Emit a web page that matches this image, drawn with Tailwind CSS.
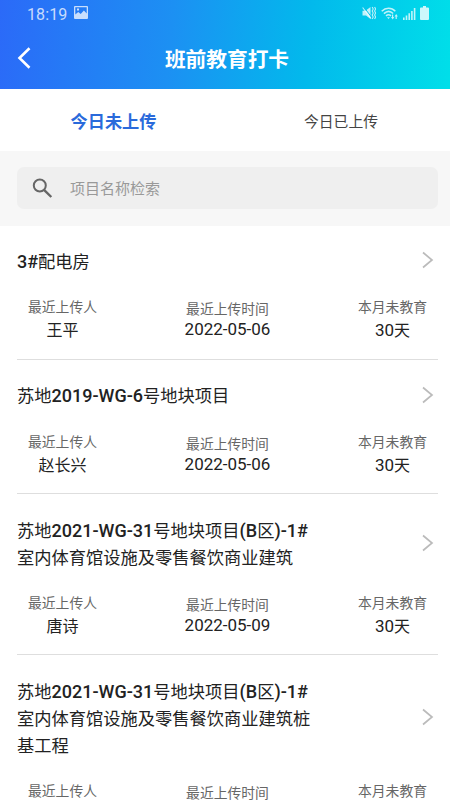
<!DOCTYPE html>
<html lang="zh-CN">
<head>
<meta charset="utf-8">
<title>班前教育打卡</title>
<script src="https://cdn.jsdelivr.net/npm/@tailwindcss/browser@4"></script>
</head>
<body class="bg-white">
<div class="w-[450px] h-[800px] overflow-hidden flex flex-col bg-white text-[#222] font-[Roboto,'Noto_Sans_CJK_SC',sans-serif]">
  <header class="h-[88.5px] shrink-0 bg-linear-[95deg,#2b6af8_0%,#1c90f3_38%,#02b9ec_68%,#00dfe9_100%] text-white">
    <div class="h-[28px] flex items-center pl-[27px] pr-[21px] text-white/75">
      <span class="text-[16px] leading-none tracking-[0.1px] pt-px">18:19</span>
      <svg class="ml-[7px] -mt-[3px]" width="14" height="13" viewBox="0 0 14 13"><path fill="currentColor" fill-rule="evenodd" d="M1 0h12a1 1 0 0 1 1 1v11a1 1 0 0 1-1 1H1a1 1 0 0 1-1-1V1a1 1 0 0 1 1-1zM1.300 1.300v7.200L4.200 6l2.500 2 3.200-3.600 2.800 3V1.300zM3 2.600h2v2H3z"/></svg>
      <svg class="ml-auto -mt-[2px]" width="14" height="14" viewBox="0 0 14 14" fill="none" stroke="currentColor"><path fill="currentColor" stroke="none" d="M.5 4.800h3L8.500 1v12L4 9.500H.5z"/><path stroke="#08c2ec" stroke-width="1" d="M1.800 1l8 10.500"/><path stroke-width="1.100" d="M.6 1.500l8.400 11"/><path stroke-width="1.100" d="M10.200 1l1 2-1 2 1 2-1 2 1 2-1 2M12.600 1l1 2-1 2 1 2-1 2 1 2-1 2"/></svg>
      <svg class="ml-[5px] -mt-[2px]" width="18" height="13" viewBox="0 0 18 13" fill="none" stroke="currentColor" stroke-width="1.500"><path d="M.7 4.200c4-4 9.800-4 13.600 0M2.900 6.600c3-2.800 6.500-2.800 9.200 0M5 8.900c1.600-1.500 3.400-1.500 5 0"/><path stroke="none" fill="currentColor" d="M6 10.200h3L7.500 12zM10 10h1V7.500h1.200V10h1.100l-1.600 2.500zM13.500 9.500l1.700-2.500 1.700 2.500h-1.100v2.500h-1.200V9.500z"/></svg>
      <svg class="ml-[4px]" width="13" height="12" viewBox="0 0 13 12" fill="currentColor"><path d="M0 9.500h1.600V12H0zM2.700 7.500h1.600V12H2.700zM5.400 5.300H7V12H5.400zM8.100 3h1.600v9H8.100zM10.800 0h1.600v12h-1.600z"/></svg>
      <svg class="ml-[4px] text-white/80 -mt-[2px]" width="9" height="14" viewBox="0 0 9 14" fill="currentColor"><path d="M3 0h3v1.500h2a1 1 0 0 1 1 1V13a1 1 0 0 1-1 1H1a1 1 0 0 1-1-1V2.500a1 1 0 0 1 1-1h2z"/></svg>
    </div>
    <div class="h-[60px] grid grid-cols-[60px_1fr_60px] items-center">
      <svg class="ml-[17px]" width="14" height="22" viewBox="0 0 14 22" fill="none" stroke="#fff" stroke-width="2.600"><path d="M12.500 1.200L2.500 11l10 9.800"/></svg>
      <h1 class="text-center text-[20.7px] font-bold leading-none pl-[4px] pt-[5px]">班前教育打卡</h1>
    </div>
  </header>
  <nav class="h-[62px] shrink-0 grid grid-cols-2 items-center text-center pt-[5px]">
    <div class="text-[17.2px] font-bold text-[#2a6adb] pl-[2px] pt-px">今日未上传</div>
    <div class="text-[14.8px] text-[#444] pl-[7px]">今日已上传</div>
  </nav>
  <div class="h-[75px] shrink-0 bg-[#f7f7f7] pt-[16.5px] pl-[17px] pr-[12px]">
    <div class="h-[42px] rounded-[7px] bg-[#efefef] flex items-center pl-[15px] text-[15px] text-[#999]">
      <svg width="21" height="21" viewBox="0 0 21 21" fill="none" stroke="#666" stroke-width="2"><circle cx="7.800" cy="7.500" r="6"/><path stroke-width="2.400" d="M12 11.800l7.300 7.200"/></svg>
      <span class="ml-[17px] pt-[3px]">项目名称检索</span>
    </div>
  </div>
  <main class="pl-[17px] pr-[12px]">
    <article class="h-[134.2px] border-b border-[#dedede] pt-[23.500px]">
      <div class="flex items-center justify-between"><h2 class="text-[17.25px] leading-[26.7px]"><span class="font-medium text-[18px] leading-none">3#</span>配电房</h2><svg class="mr-[4px] -mt-[4px]" width="12" height="18" viewBox="0 0 12 18" fill="none" stroke="#bbb" stroke-width="1.700"><path d="M1 1.500L10 9l-9 7.500"/></svg></div>
      <div class="mt-[20.500px] flex justify-between text-center text-[16px] leading-[24px]">
        <div class="w-[91px]"><p class="text-[13.8px] leading-[22px] text-[#666]">最近上传人</p><p class="pt-px">王平</p></div>
        <div class="w-[100px] pt-[2px]"><p class="text-[13.8px] leading-[22px] text-[#666]">最近上传时间</p><p class="-mt-[3px] text-[17px]">2022-05-06</p></div>
        <div class="w-[91px]"><p class="text-[13.8px] leading-[22px] text-[#666]">本月未教育</p><p class="pt-px"><span class="text-[17px] leading-none">30</span>天</p></div>
      </div>
    </article>
    <article class="h-[134.2px] border-b border-[#dedede] pt-[23.500px]">
      <div class="flex items-center justify-between"><h2 class="text-[17.25px] leading-[26.7px]">苏地<span class="font-medium text-[18px] leading-none">2019-WG-6</span>号地块项目</h2><svg class="mr-[4px] -mt-[4px]" width="12" height="18" viewBox="0 0 12 18" fill="none" stroke="#bbb" stroke-width="1.700"><path d="M1 1.500L10 9l-9 7.500"/></svg></div>
      <div class="mt-[21px] flex justify-between text-center text-[16px] leading-[24px]">
        <div class="w-[91px]"><p class="text-[13.8px] leading-[22px] text-[#666]">最近上传人</p><p class="pt-px">赵长兴</p></div>
        <div class="w-[100px] pt-[2px]"><p class="text-[13.8px] leading-[22px] text-[#666]">最近上传时间</p><p class="-mt-[3px] text-[17px]">2022-05-06</p></div>
        <div class="w-[91px]"><p class="text-[13.8px] leading-[22px] text-[#666]">本月未教育</p><p class="pt-px"><span class="text-[17px] leading-none">30</span>天</p></div>
      </div>
    </article>
    <article class="h-[161px] border-b border-[#dedede] pt-[24.300px]">
      <div class="flex items-center justify-between"><h2 class="text-[17.25px] leading-[26.7px]">苏地<span class="font-medium text-[18px] leading-none">2021-WG-31</span>号地块项目<span class="font-medium text-[18px] leading-none">(B</span>区<span class="font-medium text-[18px] leading-none">)-1#</span><br>室内体育馆设施及零售餐饮商业建筑</h2><svg class="mr-[4px] -mt-[4px]" width="12" height="18" viewBox="0 0 12 18" fill="none" stroke="#bbb" stroke-width="1.700"><path d="M1 1.500L10 9l-9 7.500"/></svg></div>
      <div class="mt-[20.200px] flex justify-between text-center text-[16px] leading-[24px]">
        <div class="w-[91px]"><p class="text-[13.8px] leading-[22px] text-[#666]">最近上传人</p><p class="pt-px">唐诗</p></div>
        <div class="w-[100px] pt-[2px]"><p class="text-[13.8px] leading-[22px] text-[#666]">最近上传时间</p><p class="-mt-[3px] text-[17px]">2022-05-09</p></div>
        <div class="w-[91px]"><p class="text-[13.8px] leading-[22px] text-[#666]">本月未教育</p><p class="pt-px"><span class="text-[17px] leading-none">30</span>天</p></div>
      </div>
    </article>
    <article class="pt-[24.300px]">
      <div class="flex items-center justify-between"><h2 class="text-[17.25px] leading-[26.7px]">苏地<span class="font-medium text-[18px] leading-none">2021-WG-31</span>号地块项目<span class="font-medium text-[18px] leading-none">(B</span>区<span class="font-medium text-[18px] leading-none">)-1#</span><br>室内体育馆设施及零售餐饮商业建筑桩<br>基工程</h2><svg class="mr-[4px] -mt-[4px]" width="12" height="18" viewBox="0 0 12 18" fill="none" stroke="#bbb" stroke-width="1.700"><path d="M1 1.500L10 9l-9 7.500"/></svg></div>
      <div class="mt-[21px] flex justify-between text-center">
        <p class="w-[91px] text-[13.8px] leading-[22px] text-[#666]">最近上传人</p>
        <p class="w-[100px] pt-[2px] text-[13.8px] leading-[22px] text-[#666]">最近上传时间</p>
        <p class="w-[91px] text-[13.8px] leading-[22px] text-[#666]">本月未教育</p>
      </div>
    </article>
  </main>
</div>
</body>
</html>
